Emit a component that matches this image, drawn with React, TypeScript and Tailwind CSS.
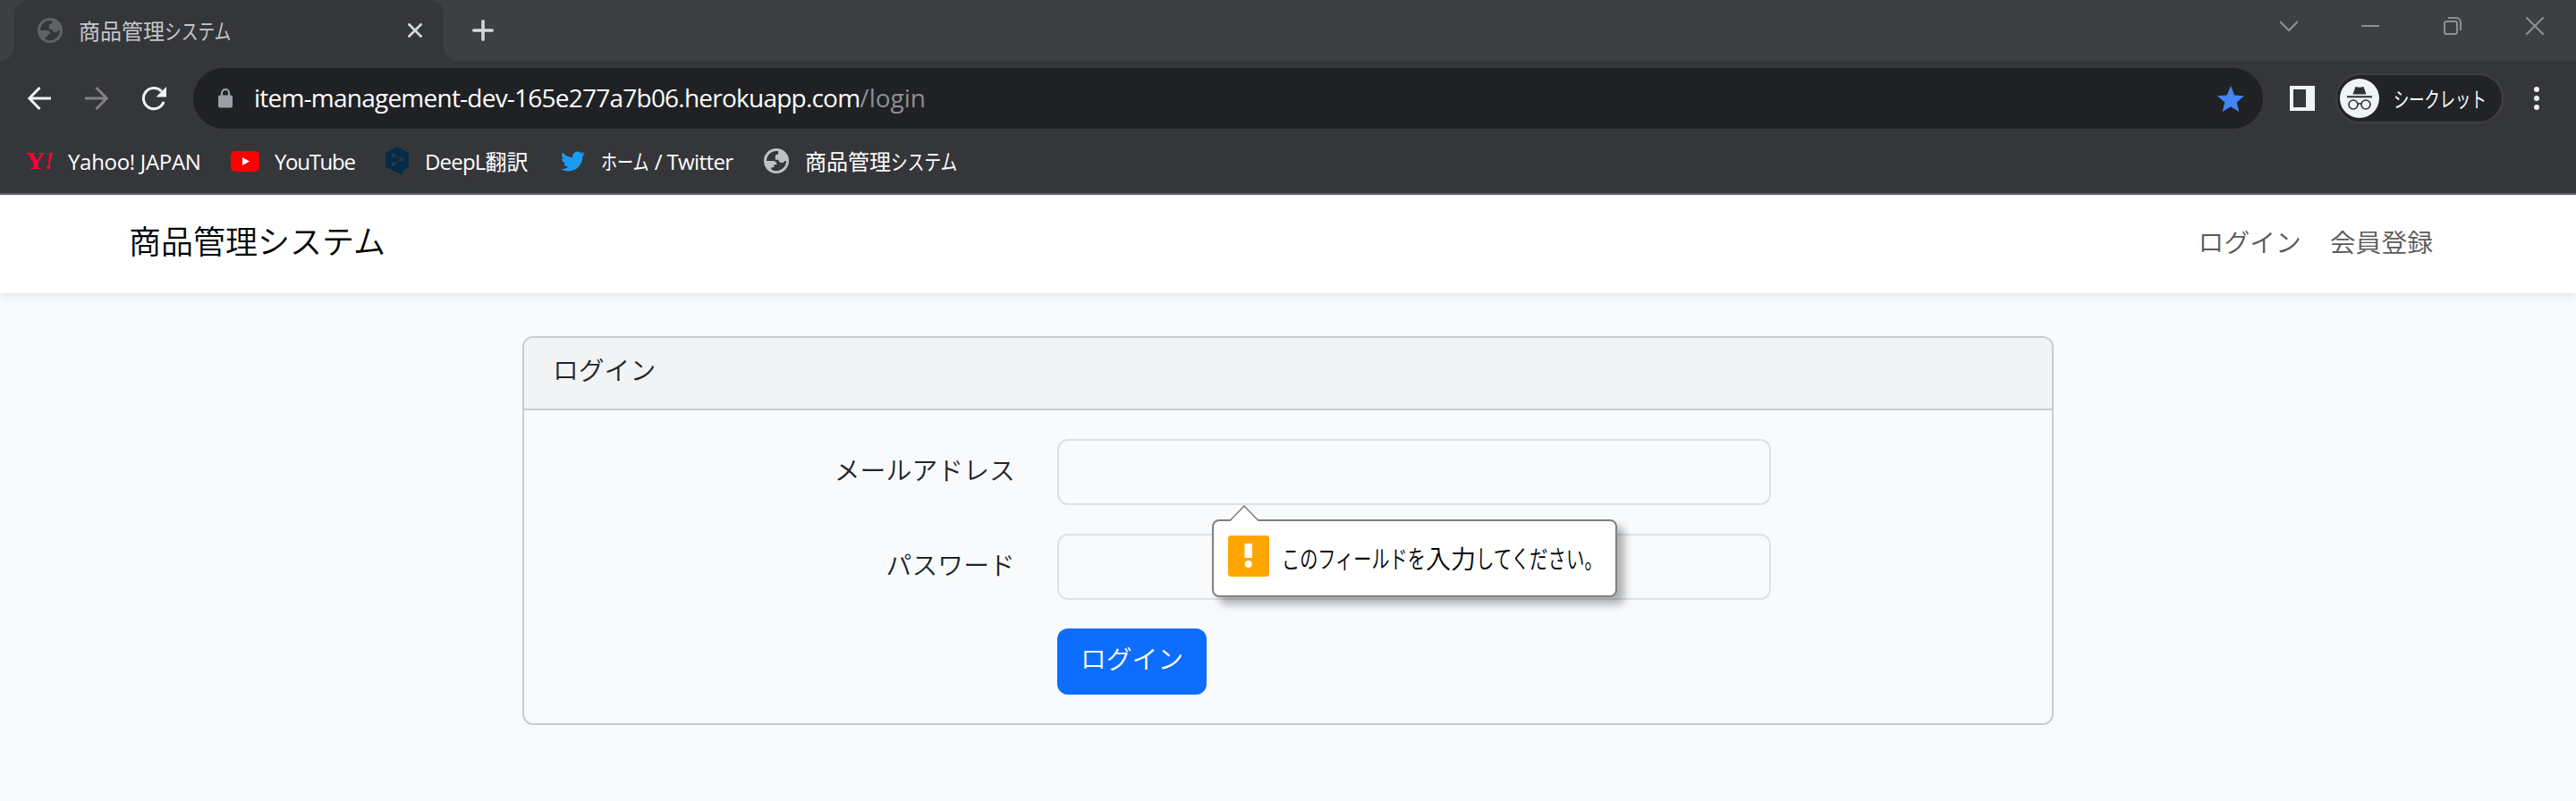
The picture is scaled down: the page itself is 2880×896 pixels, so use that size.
import type { ReactNode } from "react";
import { FaTwitter } from "react-icons/fa";

function Kana({ className, children }: { className: string; children: ReactNode }) {
  return <span className={"inline-block origin-left whitespace-nowrap " + className}>{children}</span>;
}

function Globe({ className, hole }: { className: string; hole: string }) {
  return (
    <svg viewBox="0 0 28 28" className={"size-7 shrink-0 " + className}>
      <circle cx="14" cy="14" r="14" fill="currentColor" />
      <path
        className={hole}
        d="M16 3.1C9 2 3 7.200 3 14h6.500c3 0 5 1.400 5 4.200h-3.200v3h-3v2.200C15 28 25 23 25 14h-1.600c-.6 1.400-1.900 2-3.600 2-2.300 0-3.400-1.300-3.400-3.200h-3.600V8.600c0-1.300 1-1.900 2.400-1.900h.9Z"
      />
    </svg>
  );
}

function TabStrip() {
  return (
    <div className="flex h-[68px] bg-[#35363a]">
      <div className="w-4 rounded-br-2xl bg-[#3c4043]" />
      <div className="w-[480px] bg-[#3c4043]">
        <div className="flex h-full items-center rounded-t-2xl bg-[#35363a] pl-[26px] pr-6">
          <Globe className="text-[#5f6368]" hole="fill-[#35363a]" />
          <div className="ml-[18px] mt-px flex-1 whitespace-nowrap text-2xl leading-none text-[#c4c7ca]">
            商品管理<Kana className="w-[76px] scale-x-[.78]">システム</Kana>
          </div>
          <svg viewBox="0 0 16 16" className="size-4 text-[#d5d7da]" stroke="currentColor" strokeWidth="2.800">
            <path d="M0.500 0.500l15 15M15.500 0.500l-15 15" />
          </svg>
        </div>
      </div>
      <div className="flex flex-1 rounded-bl-2xl bg-[#3c4043] pl-8">
        <svg viewBox="0 0 24 24" className="mt-[22px] size-6 text-[#d5d7da]" stroke="currentColor" strokeWidth="3.600" strokeLinecap="round">
          <path d="M12 1.800v20.400M1.800 12h20.400" />
        </svg>
        <div className="ml-auto mr-9 mt-[19px] flex text-[#8d9092]">
          <svg viewBox="0 0 20 20" className="mr-[71px] size-5" fill="none" stroke="currentColor" strokeWidth="2">
            <path d="M0 5l10 10L20 5" />
          </svg>
          <svg viewBox="0 0 20 20" className="mr-[72px] size-5" stroke="currentColor" strokeWidth="2">
            <path d="M0 10h20" />
          </svg>
          <svg viewBox="0 0 20 20" className="mr-[72px] size-5" fill="none" stroke="currentColor" strokeWidth="2">
            <rect x="1" y="5" width="14" height="14" rx="2" />
            <path d="M5 1h9a5 5 0 0 1 5 5v9" />
          </svg>
          <svg viewBox="0 0 20 20" className="size-5" stroke="currentColor" strokeWidth="2">
            <path d="M0 0l20 20M20 0L0 20" />
          </svg>
        </div>
      </div>
    </div>
  );
}

function Toolbar() {
  return (
    <div className="flex h-[76px] items-center pt-2 text-[#f1f3f4]">
      <svg viewBox="0 0 26 26" className="ml-[31px] size-[26px]" fill="none" stroke="currentColor" strokeWidth="3">
        <path d="M26 13H2.500M13.500 1L1.800 13l11.700 12" />
      </svg>
      <svg viewBox="0 0 26 26" className="ml-[38px] size-[26px] text-[#808185]" fill="none" stroke="currentColor" strokeWidth="3">
        <path d="M0 13h23.500M12.500 1l11.700 12-11.700 12" />
      </svg>
      <svg viewBox="0 0 28 28" className="ml-[37px] size-7" fill="none" stroke="currentColor" strokeWidth="3">
        <path d="M25 17.800A11.600 11.600 0 1 1 22.500 6.200" />
        <path d="M28 1v11.500H16.500z" fill="currentColor" stroke="none" />
      </svg>
      <div className="ml-[30px] flex h-[68px] w-[2314px] items-center rounded-full bg-[#202124] pl-7 pr-[21px]">
        <svg viewBox="0 0 16 22" className="h-[22px] w-4 text-[#9aa0a6]">
          <rect y="7.500" width="16" height="14" rx="2" fill="currentColor" />
          <path d="M4 9V5a4 4 0 0 1 8 0v4" fill="none" stroke="currentColor" strokeWidth="2.200" />
        </svg>
        <div className="mb-0.5 ml-6 flex-1 whitespace-nowrap text-[28px] leading-none text-[#8c8f93]">
          <span className="tracking-[-0.77px] text-white">item-management-dev-165e277a7b06.herokuapp.com</span>
          <span>/login</span>
        </div>
        <svg viewBox="0 0 30 29" className="h-[29px] w-[30px]" fill="#4285f4">
          <path d="M15 0l4.200 10.400L30 11.200l-8.300 7.200L24.300 29 15 23.300 5.700 29l2.600-10.600L0 11.200l10.800-.8z" />
        </svg>
      </div>
      <svg viewBox="0 0 28 28" className="ml-[30px] size-7">
        <path fillRule="evenodd" d="M0 0h28v28H0zM4 4v20h14V4z" fill="currentColor" />
      </svg>
      <div className="ml-[23px] flex h-14 w-[188px] items-center rounded-full border-2 border-[#3f4043] bg-[#222326] pl-[3px]">
        <svg viewBox="0 0 44 44" className="size-11 shrink-0">
          <circle cx="22" cy="22" r="22" fill="#f1f3f4" />
          <path d="M14.500 17.500l3-8.500q4.500 1.600 9 0l3 8.500zM8 19.200h28v2H8z" fill="#2f3034" />
          <g fill="none" stroke="#2f3034" strokeWidth="1.600">
            <circle cx="15" cy="29" r="5" />
            <circle cx="29" cy="29" r="5" />
            <path d="M20 28.500q2-1.400 4 0" />
          </g>
        </svg>
        <div className="ml-4 mt-0.5 text-2xl leading-none text-white">
          <Kana className="w-[104px] scale-x-[.72]">シークレット</Kana>
        </div>
      </div>
      <svg viewBox="0 0 6 26" className="ml-[34px] h-[26px] w-1.5" fill="currentColor">
        <circle cx="3" cy="3" r="3" />
        <circle cx="3" cy="13" r="3" />
        <circle cx="3" cy="23" r="3" />
      </svg>
    </div>
  );
}

function Bookmarks() {
  return (
    <div className="flex h-[72px] items-center whitespace-nowrap pl-7 pt-0.5 text-2xl leading-none text-white">
      <div className="mb-0.5 flex w-8 items-center font-['Liberation_Serif'] text-[27px] font-bold leading-none text-[#ff0033]">
        <span className="inline-block w-[23px] origin-left scale-x-[1.150]">Y</span>
        <span className="italic">!</span>
      </div>
      <span className="ml-4 w-[182px] tracking-[-0.3px]">Yahoo! JAPAN</span>
      <svg viewBox="0 0 32 23" className="mb-px h-[23px] w-8">
        <rect width="32" height="23" rx="5" fill="#ff0000" />
        <path d="M13 7l8 4.500-8 4.500z" fill="#fff" />
      </svg>
      <span className="ml-[17px] w-[124px] tracking-[-1.300px]">YouTube</span>
      <svg viewBox="0 0 26 32" className="mb-0.5 h-8 w-[26px]">
        <path d="M13 0l13 7.300v15.400l-6.500 3.700V32L0 22.700V7.300z" fill="#042b48" />
        <path d="M9 9.500l9 5-9 5" fill="none" stroke="#2c3844" strokeWidth="1.400" />
        <g fill="#2c3844">
          <circle cx="9" cy="9.500" r="2.300" />
          <circle cx="18" cy="14.500" r="2.300" />
          <circle cx="9" cy="19.500" r="2.300" />
        </g>
      </svg>
      <span className="ml-[18px] w-[152px]">
        <span className="tracking-[-0.8px]">DeepL</span>翻訳
      </span>
      <FaTwitter className="mb-0.5 size-[27px] text-[#1d9bf0]" />
      <span className="ml-[18px] w-[182px]">
        <Kana className="w-[54px] scale-x-[.75]">ホーム</Kana>
        <span className="tracking-[-0.6px]"> / Twitter</span>
      </span>
      <Globe className="mb-0.5 text-[#bdc1c6]" hole="fill-[#35363a]" />
      <span className="ml-[18px]">
        商品管理<Kana className="w-[76px] scale-x-[.78]">システム</Kana>
      </span>
    </div>
  );
}

function ValidationBubble() {
  return (
    <div className="absolute left-[173px] top-[90px] z-10 flex h-[87px] w-[453px] items-center rounded-lg border-2 border-[#808080] bg-white pl-4 shadow-[8px_8px_10px_rgba(0,0,0,.3)]">
      <svg viewBox="0 0 34 19" className="absolute -top-[18px] left-[17px] h-[19px] w-[34px]">
        <path d="M1 18L17 1l16 17v1H1z" fill="#fff" />
        <path d="M1 17.500L17 1l16 16.500" fill="none" stroke="#808080" strokeWidth="1.600" />
      </svg>
      <svg viewBox="0 0 46 46" className="mb-[5px] size-[46px] shrink-0">
        <rect width="46" height="46" rx="3.500" fill="#ffa500" />
        <rect x="18.500" y="9" width="8.500" height="16" fill="#fff" />
        <circle cx="22.800" cy="32" r="4" fill="#fff" />
      </svg>
      <div className="ml-3.5 whitespace-nowrap text-[28px] font-[350] leading-none text-black">
        <Kana className="w-[161px] scale-x-[.72]">このフィールドを</Kana>入力
        <Kana className="w-[144px] scale-x-[.73]">してください。</Kana>
      </div>
    </div>
  );
}

function Field({ label, children }: { label: string; children?: ReactNode }) {
  return (
    <div className="mb-8 flex h-[74px]">
      <label className="mt-[21px] w-[549px] text-right leading-none tracking-[0.1px]">{label}</label>
      <div className="relative ml-[47px] w-[798px]">
        <input className="block h-full w-full rounded-xl border-2 border-[#dee2e6] bg-[#f8fafc] px-6 outline-none" />
        {children}
      </div>
    </div>
  );
}

export default function App() {
  return (
    <div className="h-[896px] w-[2880px] overflow-hidden bg-[#f8fafc] font-['Open_Sans','Noto_Sans_CJK_JP',sans-serif]">
      <header className="h-[218px] border-b-2 border-[#5f6066] bg-[#35363a]">
        <TabStrip />
        <Toolbar />
        <Bookmarks />
      </header>
      <nav className="flex h-[110px] items-center bg-white pb-1 pl-36 pr-40 font-[350] leading-none shadow-[0_4px_8px_rgba(0,0,0,.075)]">
        <a className="text-[36px] text-black">商品管理システム</a>
        <div className="ml-auto flex gap-8 text-[28.8px] text-[#595959]">
          <a>ログイン</a>
          <a>会員登録</a>
        </div>
      </nav>
      <main className="pt-12 text-[28.8px] font-[350] text-[#212529]">
        <section className="mx-auto h-[435px] w-[1712px] rounded-xl border-2 border-[#c9cccf]">
          <h1 className="h-[81px] rounded-t-[10px] border-b-2 border-[#c9cccf] bg-[#f1f3f4] pl-8 pt-[22px] leading-none">ログイン</h1>
          <form className="pt-8">
            <Field label="メールアドレス">
              <ValidationBubble />
            </Field>
            <Field label="パスワード" />
            <button type="button" className="ml-[596px] flex h-[74px] w-[167px] justify-center rounded-xl bg-[#0d6efd] pt-[20px] leading-none text-white">
              ログイン
            </button>
          </form>
        </section>
      </main>
    </div>
  );
}
